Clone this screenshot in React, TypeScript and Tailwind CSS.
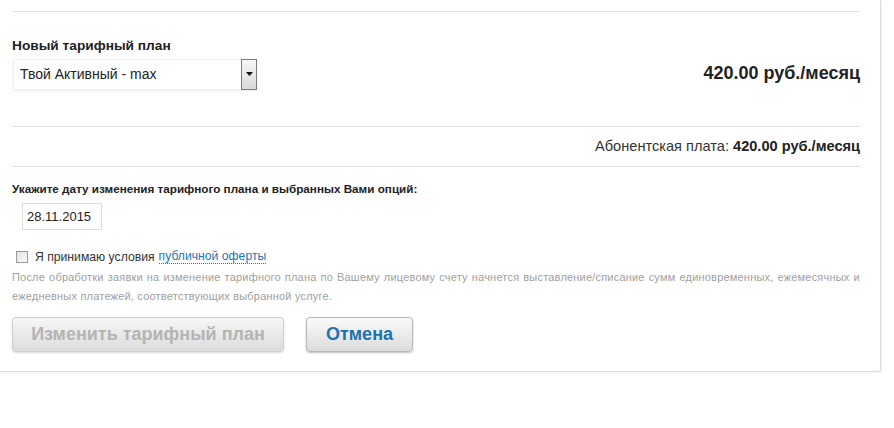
import React from 'react';

const noteLine1 =
  'После обработки заявки на изменение тарифного плана по Вашему лицевому счету начнется выставление/списание сумм единовременных, ежемесячных и';

export default function App() {
  return (
    <div className="w-[894px] h-[428px] bg-white font-['Liberation_Sans',Arial,sans-serif] text-[#333] overflow-hidden">
      {/* Panel */}
      <div className="w-[881px] bg-white border-r border-b border-[#dcdcdc] rounded-br-[3px] shadow-[1px_1px_2px_rgba(0,0,0,0.06)] pt-[11px] pl-3 pr-5 pb-[19px]">
        <div className="border-t border-[#e2e2e2]" />

        {/* New plan */}
        <div className="flex items-end justify-between mt-[26px]">
          <div>
            <div className="text-[13.7px] font-bold leading-[15px] text-[#222]">Новый тарифный план</div>
            <div className="mt-[6px] ml-px w-[244px] h-[31px] flex items-center justify-between bg-white border border-[#f0f0f0] shadow-[0_1px_2px_rgba(0,0,0,0.08)]">
              <span className="pl-[6px] text-[14px] text-[#222]">Твой Активный - max</span>
              <span className="w-4 h-[31px] -mr-px -mt-px flex items-center justify-center border border-[#7a7a7a] bg-gradient-to-b from-[#f6f6f6] to-[#dadada]">
                <svg width="7" height="4" viewBox="0 0 7 4">
                  <path d="M0 0h7L3.5 4z" fill="#111" />
                </svg>
              </span>
            </div>
          </div>
          <div className="text-[18px] font-bold text-[#222] mb-[3px]">420.00 руб./месяц</div>
        </div>

        <div className="border-t border-[#e2e2e2] mt-[36px]" />
        <div className="h-[39px] flex items-center justify-end text-[14.6px] text-[#333]">
          Абонентская плата:&nbsp;<b className="text-[#222]">420.00 руб./месяц</b>
        </div>
        <div className="border-t border-[#e2e2e2]" />

        {/* Date */}
        <div className="mt-[14px] text-[11.7px] font-bold leading-4 text-[#222]">
          Укажите дату изменения тарифного плана и выбранных Вами опций:
        </div>
        <div className="mt-[6px] ml-[10px] w-[80px] h-[27px] flex items-center pl-[4px] border border-[#dedede] text-[13px] text-[#222]">
          28.11.2015
        </div>

        {/* Agreement */}
        <div className="mt-[19px] flex items-center h-4 text-[12.2px]">
          <span className="ml-[4px] w-[12px] h-[12px] border border-[#9a9a9a] bg-gradient-to-br from-[#e4e4e4] to-[#fafafa]" />
          <span className="ml-[7px] text-[#333]">Я принимаю условия</span>
          <span className="ml-1 text-[#1b78b1] border-b border-dotted border-[#1b78b1] leading-[13px]">публичной оферты</span>
        </div>
        <div className="mt-[3px] text-[11px] leading-[19px] text-[#a0a0a0] tracking-[0.2px]">
          <div className="flex justify-between">
            {noteLine1.split(' ').map((w, i) => (
              <span key={i}>{w}</span>
            ))}
          </div>
          <div>ежедневных платежей, соответствующих выбранной услуге.</div>
        </div>

        {/* Buttons */}
        <div className="mt-[11px] flex gap-[22px]">
          <button className="w-[272px] h-[35px] rounded-[4px] border border-[#cfcfcf] bg-gradient-to-b from-[#f7f7f7] to-[#dcdcdc] shadow-[0_1px_2px_rgba(0,0,0,0.15)] text-[18px] font-bold text-[#b4b4b4]">
            Изменить тарифный план
          </button>
          <button className="w-[107px] h-[35px] rounded-[4px] border border-[#b8b8b8] bg-gradient-to-b from-[#fafafa] to-[#dcdcdc] shadow-[0_1px_2px_rgba(0,0,0,0.25)] text-[18px] font-bold text-[#1b72ad]">
            Отмена
          </button>
        </div>
      </div>
    </div>
  );
}
